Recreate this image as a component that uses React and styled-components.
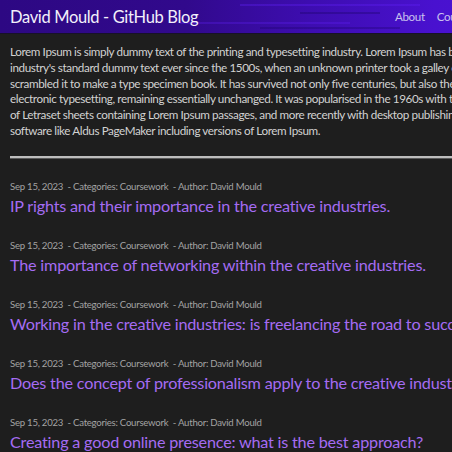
import styled, { createGlobalStyle } from "styled-components";

const GlobalStyle = createGlobalStyle`
html, body {
  margin: 0;
  padding: 0;
  background: #1e1e1e;
  overflow: hidden;
}
body {
  font-family: Lato, "Noto Sans", sans-serif;
}
`

const Page = styled.div`
width: 620px;
min-height: 452px;
background: #1e1e1e;
`

const Header = styled.header`
height: 33px;
display: grid;
grid-template-columns: 385px auto;
align-items: center;
padding-left: 10px;
border-bottom: 1px solid #17112a;
background:
  linear-gradient(90deg, transparent 0 240px, rgba(95, 30, 245, 0.35) 240px 420px, transparent 420px) 0 4px / 100% 2px no-repeat,
  linear-gradient(90deg, transparent 0 300px, rgba(20, 0, 90, 0.3) 300px 380px, transparent 380px) 0 12px / 100% 2px no-repeat,
  linear-gradient(90deg, transparent 0 180px, rgba(95, 30, 245, 0.3) 180px 350px, transparent 350px) 0 22px / 100% 2px no-repeat,
  linear-gradient(90deg, transparent 0 260px, rgba(25, 0, 100, 0.3) 260px 400px, transparent 400px) 0 27px / 100% 2px no-repeat,
  linear-gradient(90deg, #2d0883 0%, #31098c 30%, #3d0db0 50%, #4911cf 70%, #4f13dc 100%);
`

const Brand = styled.a`
color: #f2f0fa;
font-size: 16.5px;
letter-spacing: -0.35px;
text-decoration: none;
white-space: nowrap;
`

const Nav = styled.nav`
display: flex;
gap: 12px;
`

const NavLink = styled.a`
color: #c9c0ee;
font-size: 11.6px;
letter-spacing: -0.35px;
text-decoration: none;
`

const Main = styled.main`
padding: 10px 10px 0 10px;
`

const Intro = styled.div`
color: #d2d2d2;
font-size: 11.7px;
letter-spacing: -0.4px;
line-height: 15.8px;
`

const IntroLine = styled.div`
white-space: nowrap;
`

const Rule = styled.hr`
margin: 17px 0 22px 0;
border: none;
height: 2px;
background: #bdbdbd;
box-shadow: 0 1px 0 #5a5a5a;
`

const PostList = styled.ul`
list-style: none;
margin: 0;
padding: 0;
`

const Post = styled.li`
height: 59px;
`

const Meta = styled.div`
color: #a3a3a3;
font-size: 9.6px;
letter-spacing: -0.25px;
line-height: 14px;
white-space: pre;
`

const PostTitle = styled.a`
display: block;
color: #a56cf3;
font-size: 16.2px;
letter-spacing: -0.2px;
line-height: 24px;
text-decoration: none;
white-space: nowrap;
`

const introLines = [
    "Lorem Ipsum is simply dummy text of the printing and typesetting industry. Lorem Ipsum has been the",
    "industry's standard dummy text ever since the 1500s, when an unknown printer took a galley of type and",
    "scrambled it to make a type specimen book. It has survived not only five centuries, but also the leap into",
    "electronic typesetting, remaining essentially unchanged. It was popularised in the 1960s with the release",
    "of Letraset sheets containing Lorem Ipsum passages, and more recently with desktop publishing",
    "software like Aldus PageMaker including versions of Lorem Ipsum.",
];

const posts = [
    "IP rights and their importance in the creative industries.",
    "The importance of networking within the creative industries.",
    "Working in the creative industries: is freelancing the road to success?",
    "Does the concept of professionalism apply to the creative industries?",
    "Creating a good online presence: what is the best approach?",
];

function App(){
    return (
        <Page>
            <GlobalStyle/>
            <Header>
                <Brand href="#">David Mould - GitHub Blog</Brand>
                <Nav>
                    <NavLink href="#">About</NavLink>
                    <NavLink href="#">Coursework</NavLink>
                </Nav>
            </Header>
            <Main>
                <Intro>
                    {introLines.map((line, index) => (
                        <IntroLine key={index}>{line}</IntroLine>
                    ))}
                </Intro>
                <Rule/>
                <PostList>
                    {posts.map((title, index) => (
                        <Post key={index}>
                            <Meta>{"Sep 15, 2023  - Categories: Coursework  - Author: David Mould"}</Meta>
                            <PostTitle href="#">{title}</PostTitle>
                        </Post>
                    ))}
                </PostList>
            </Main>
        </Page>
    )
}

export default App;
